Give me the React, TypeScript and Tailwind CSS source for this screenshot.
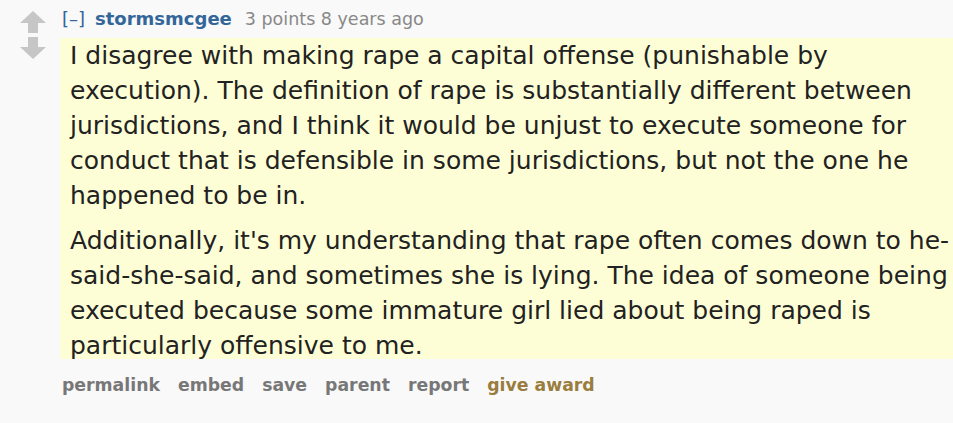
const para1 = [
  'I disagree with making rape a capital offense (punishable by',
  'execution). The definition of rape is substantially different between',
  'jurisdictions, and I think it would be unjust to execute someone for',
  'conduct that is defensible in some jurisdictions, but not the one he',
  'happened to be in.',
];

const para2 = [
  "Additionally, it's my understanding that rape often comes down to he-",
  'said-she-said, and sometimes she is lying. The idea of someone being',
  'executed because some immature girl lied about being raped is',
  'particularly offensive to me.',
];

export default function App() {
  return (
    <div className="min-h-[423px] w-[953px] bg-[#f9f9f9] font-['DejaVu_Sans',Verdana,sans-serif] overflow-hidden">
      <div className="flex pt-[7px]">
        {/* vote arrows */}
        <div className="w-[60px] flex flex-col items-center pl-[6px] pt-[4px] gap-[4px]">
          <Arrow up />
          <Arrow />
        </div>
        <div className="flex-1 min-w-0">
          <div className="flex items-baseline text-[18px] leading-[24px] pl-[2px]">
            <span className="text-[#369]">[–]</span>
            <span className="ml-[10px] font-bold text-[#336699]">stormsmcgee</span>
            <span className="ml-[13px] text-[17.5px] text-[#888]">3 points 8 years ago</span>
          </div>
          <div className="mt-[7px] flex flex-col gap-[10px] bg-[#fefed6] pl-[10px] text-[25px] leading-[35px] text-[#222]">
            <p>
              {para1.map((l) => (
                <span key={l} className="block whitespace-nowrap">{l}</span>
              ))}
            </p>
            <p className="-mb-[4px]">
              {para2.map((l) => (
                <span key={l} className="block whitespace-nowrap">{l}</span>
              ))}
            </p>
          </div>
          <div className="flex gap-[18px] pl-[2px] mt-[15px] text-[17.3px] leading-[22px] font-bold text-[#777]">
            <span>permalink</span>
            <span>embed</span>
            <span>save</span>
            <span>parent</span>
            <span>report</span>
            <span className="text-[#9a7d3e]">give award</span>
          </div>
        </div>
      </div>
    </div>
  );
}

function Arrow({ up }: { up?: boolean }) {
  return (
    <svg width="26" height="22" viewBox="0 0 26 22" className={up ? '' : 'rotate-180'}>
      <path d="M13 0 L26 12 L18 12 L18 22 L8 22 L8 12 L0 12 Z" fill="#c6c6c6" />
    </svg>
  );
}
